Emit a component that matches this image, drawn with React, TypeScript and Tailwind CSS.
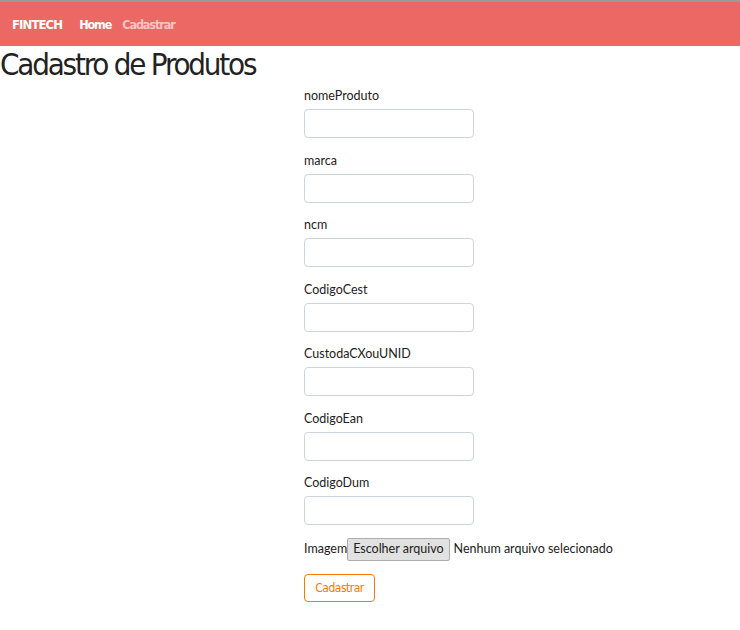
const head = { fontFamily: '"DejaVu Sans Condensed", "Liberation Sans Narrow", sans-serif' };
const body = { fontFamily: 'Lato, "Open Sans", sans-serif' };

const fields = ["nomeProduto", "marca", "ncm", "CodigoCest", "CustodaCXouUNID", "CodigoEan", "CodigoDum"];

export default function App() {
  return (
    <div className="min-h-[630px] bg-white text-[#222]" style={body}>
      <nav className="flex h-[46px] items-center border-t-2 border-[#9a9a9a] bg-[#eb6864] px-3 pt-[2px]" style={head}>
        <span className="mr-[17px] text-[13px] font-bold tracking-[-0.9px] text-white">FINTECH</span>
        <a className="mr-[11px] text-[12.5px] font-bold tracking-[-1.1px] text-white">Home</a>
        <a className="text-[12.5px] font-bold tracking-[-1.1px] text-[#f8c4c2]">Cadastrar</a>
      </nav>
      <h1 className="-mt-[1px] text-[31px] leading-[38px] font-normal tracking-[-2.2px]" style={head}>
        Cadastro de Produtos
      </h1>
      <form className="ml-[304px] mt-[4px] flex flex-col">
        {fields.map((f) => (
          <div key={f} className="mb-[13.5px] flex flex-col">
            <label className="mb-[5px] text-[12.5px] leading-[17px]">{f}</label>
            <input className="h-[29px] w-[170px] rounded-[4px] border border-[#ced4da] bg-white px-2 text-[13px] outline-none" />
          </div>
        ))}
        <div className="-mt-[1px] flex items-center text-[12.5px]">
          <span>Imagem</span>
          <button
            type="button"
            className="mr-[4px] h-[23px] rounded-[2px] border border-[#adadad] bg-[#e1e1e1] px-[5px] text-[12.5px] leading-[20px]"
          >
            Escolher arquivo
          </button>
          <span>Nenhum arquivo selecionado</span>
        </div>
        <div className="mt-[13px]">
          <button
            type="button"
            className="h-[28px] w-[71px] rounded-[4px] border border-[#f57a00] text-[12px] tracking-[-0.5px] text-[#f57a00]"
            style={head}
          >
            Cadastrar
          </button>
        </div>
      </form>
    </div>
  );
}
